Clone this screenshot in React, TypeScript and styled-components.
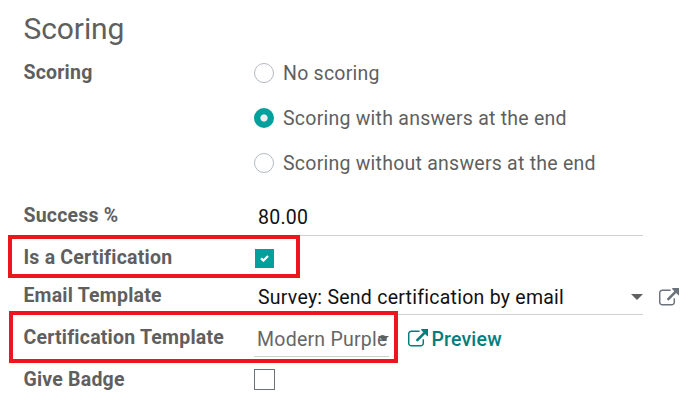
import React from "react";
import styled, { createGlobalStyle } from "styled-components";

const Global = createGlobalStyle`
  * { box-sizing: border-box; }
  body { margin: 0; background: #fff; font-family: Roboto, "Liberation Sans", sans-serif; color: #5f5f5f; }
`;

const Page = styled.main`
  width: 700px;
  height: 404px;
  padding: 6px 0 0 24px;
  overflow: hidden;
`;

const Title = styled.h1`
  margin: 0 0 0 -0.5px;
  height: 45px;
  line-height: 45px;
  font-size: 30px;
  font-weight: 400;
  letter-spacing: -0.1px;
`;

const Row = styled.div<{ $height: number }>`
  position: relative;
  display: grid;
  grid-template-columns: 230px 389px 1fr;
  height: ${(p) => p.$height}px;
`;

const Label = styled.label<{ $top: number }>`
  margin-left: -0.6px;
  padding-top: ${(p) => p.$top}px;
  line-height: 24px;
  font-size: 19.5px;
  font-weight: 700;
  white-space: nowrap;
  letter-spacing: 0.22px;
`;

const Options = styled.div`
  display: flex;
  flex-direction: column;
`;

const Option = styled.div`
  display: flex;
  align-items: center;
  gap: 9px;
  height: 45px;
  font-size: 19.5px;
  letter-spacing: 0.24px;
  white-space: nowrap;
`;

const Radio = styled.span<{ $on?: boolean }>`
  width: 20px;
  height: 20px;
  margin-bottom: 1px;
  border-radius: 50%;
  border: ${(p) => (p.$on ? "none" : "1px solid #b4bac0")};
  background: ${(p) => (p.$on ? "radial-gradient(circle, #eeeeee 3.2px, #00a09d 4px)" : "#fff")};
`;

const Field = styled.div<{ $top: number; $width?: number; $muted?: boolean; $left?: number }>`
  display: flex;
  justify-content: space-between;
  width: ${(p) => p.$width ?? 389}px;
  padding: ${(p) => p.$top}px 0 0 ${(p) => p.$left ?? 4}px;
  border-bottom: 1px solid #ced0d2;
  line-height: 24px;
  font-size: 19.5px;
  letter-spacing: 0.25px;
  color: ${(p) => (p.$muted ? "#666666" : "#111")};
  white-space: nowrap;
`;

const Caret = styled.span<{ $overlap?: boolean }>`
  flex: none;
  width: ${(p) => (p.$overlap ? 11 : 12)}px;
  height: ${(p) => (p.$overlap ? 5 : 6)}px;
  margin-top: 8px;
  margin-left: ${(p) => (p.$overlap ? -12 : 0)}px;
  background: #5f6060;
  clip-path: polygon(0 0, 100% 0, 50% 100%);
`;

const Checkbox = styled.span<{ $on?: boolean; $top: number }>`
  display: flex;
  align-items: center;
  justify-content: center;
  width: ${(p) => (p.$on ? 19 : 21)}px;
  height: ${(p) => (p.$on ? 19 : 21)}px;
  margin-top: ${(p) => p.$top}px;
  margin-left: ${(p) => (p.$on ? 1 : 0)}px;
  border: ${(p) => (p.$on ? "none" : "1px solid #6c7077")};
  background: ${(p) => (p.$on ? "#00a09d" : "#fff")};
`;

const Preview = styled.a`
  display: flex;
  align-items: flex-start;
  gap: 3px;
  margin-left: 19px;
  padding-top: 13px;
  line-height: 24px;
  font-size: 19.5px;
  font-weight: 500;
  letter-spacing: 0.2px;
  color: #017e7c;
`;

const Template = styled.div`
  display: flex;
`;

const Open = styled.span`
  display: flex;
  padding: 9px 0 0 16px;
  color: #6a727b;
`;

const Highlight = styled.div<{ $x: number; $y: number; $w: number; $h: number }>`
  position: absolute;
  left: ${(p) => p.$x}px;
  top: ${(p) => p.$y}px;
  width: ${(p) => p.$w}px;
  height: ${(p) => p.$h}px;
  border: 4px solid #ed1620;
  pointer-events: none;
  z-index: 1;
`;

const IconBox = styled.svg`
  display: block;
  flex: none;
  width: 20.4px;
  height: 17.5px;
  margin-top: 1.2px;
`;

const LinkIcon = () => (
  <IconBox viewBox="0 0 1792 1536" fill="currentColor">
    <path d="M1408 928v320q0 119-84.500 203.500t-203.500 84.500h-832q-119 0-203.500-84.500t-84.500-203.500v-832q0-119 84.500-203.500t203.500-84.500h704q14 0 23 9t9 23v64q0 14-9 23t-23 9h-704q-66 0-113 47t-47 113v832q0 66 47 113t113 47h832q66 0 113-47t47-113v-320q0-14 9-23t23-9h64q14 0 23 9t9 23zm384-864v512q0 26-19 45t-45 19-45-19l-176-176-652 652q-10 10-23 10t-23-10l-114-114q-10-10-10-23t10-23l652-652-176-176q-19-19-19-45t19-45 45-19h512q26 0 45 19t19 45z" />
  </IconBox>
);

const options = ["No scoring", "Scoring with answers at the end", "Scoring without answers at the end"];

export default function App() {
  return (
    <>
      <Global />
      <Page>
        <Title>Scoring</Title>
        <Row $height={145}>
          <Label $top={10}>Scoring</Label>
          <Options>
            {options.map((text, i) => (
              <Option key={text}>
                <Radio $on={i === 1} />
                {text}
              </Option>
            ))}
          </Options>
        </Row>
        <Row $height={40}>
          <Label $top={8}>Success %</Label>
          <Field $top={10}>80.00</Field>
        </Row>
        <Row $height={42}>
          <Label $top={10}>Is a Certification</Label>
          <Checkbox $on $top={13}>
            <svg width="9" height="7" viewBox="0 0 10 8" fill="none" stroke="#fff" strokeWidth="2.5">
              <path d="M1 3.8 3.8 6.4 9 1.2" />
            </svg>
          </Checkbox>
          <Highlight $x={-16} $y={-1} $w={292} $h={43} />
        </Row>
        <Row $height={37}>
          <Label $top={6}>Email Template</Label>
          <Field $top={8}>
            Survey: Send certification by email
            <Caret />
          </Field>
          <Open>
            <LinkIcon />
          </Open>
        </Row>
        <Row $height={42}>
          <Label $top={11}>Certification Template</Label>
          <Template>
            <Field $top={13} $width={135} $muted $left={3}>
              Modern Purple
              <Caret $overlap />
            </Field>
            <Preview>
              <LinkIcon />
              Preview
            </Preview>
          </Template>
          <Highlight $x={-15} $y={-4} $w={389} $h={52} />
        </Row>
        <Row $height={44}>
          <Label $top={11}>Give Badge</Label>
          <Checkbox $top={12} />
        </Row>
      </Page>
    </>
  );
}
